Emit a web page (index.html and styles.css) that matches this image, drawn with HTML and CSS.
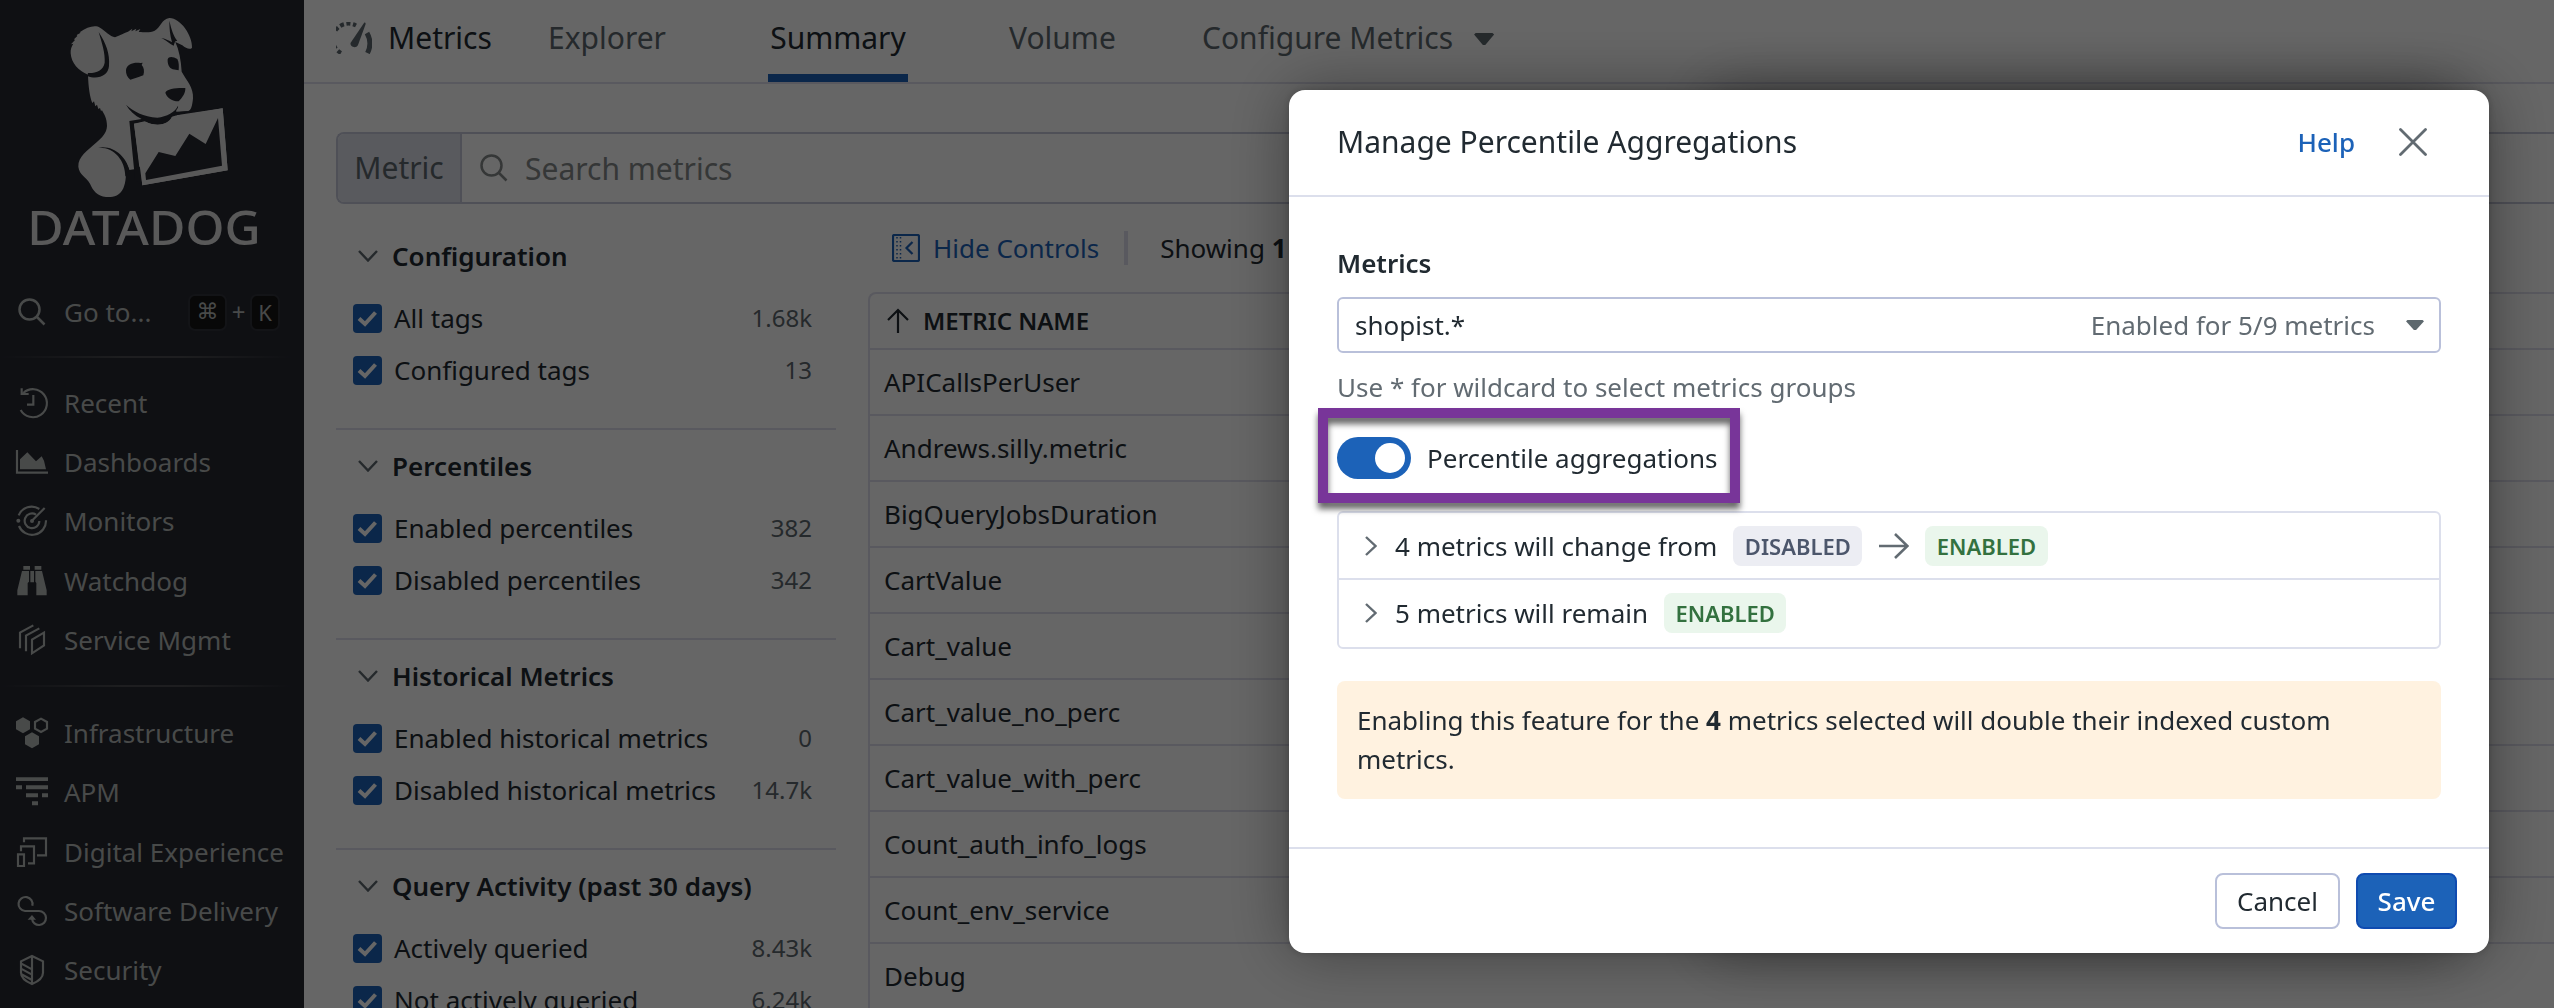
FILE: index.html
```
<!DOCTYPE html>
<html lang="en">
<head>
<meta charset="utf-8">
<title>Metrics Summary</title>
<link rel="stylesheet" href="styles.css">
</head>
<body>
<div class="app">
  <nav class="sidebar">
    <svg class="logo" viewBox="0 0 912 774" aria-label="Datadog">
      <path class="logo-fg" d="M212 160C211 148 215 138 220 131L213 133 225 120 222 118 232 108 230 105 242 98 239 97C262 80 286 74 300 83C316 93 330 109 345 112C360 106 374 98 384 95L397 86 394 94 409 86 406 94 421 87 416 96C440 97 452 98 464 92C482 82 485 57 508 54C540 53 578 106 576 143C571 150 558 146 547 136L526 126C537 150 543 180 545 215C560 242 581 262 579 295C577 318 573 331 565 333L532 337 528 346 668 325 683 511 427 556 422 505 388 510C384 500 380 492 376 486C380 520 378 546 370 565C358 591 336 592 318 591C292 588 279 572 270 551C258 530 238 525 235 500C234 470 262 452 290 427C306 412 320 400 321 378C321 355 312 342 306 331L303 333 300 324 295 327 291 314 286 319 282 304 277 309C270 292 265 262 264 224C235 212 214 190 212 160Z"/>
      <path class="logo-bg" d="M296 96C318 130 330 160 327 198C325 228 292 240 262 228L264 219C288 220 310 212 314 188C316 160 306 130 296 96ZM508 62C515 90 520 108 532 122C522 122 524 132 521 137C510 132 500 122 484 114C498 117 508 122 516 127C510 105 508 85 508 62ZM378 210C380 192 402 186 421 189L428 188 425 195C432 202 434 214 430 226L416 231 391 239C382 232 377 222 378 210ZM503 178C506 168 520 170 532 177C537 187 537 198 536 211L518 208C506 204 502 190 503 178ZM496 278C500 266 530 263 556 264C557 278 548 292 536 304C520 305 500 294 496 278ZM378 314C400 334 430 350 472 353C500 350 526 336 534 317C536 326 527 328 529 335L570 333 516 350C510 362 496 374 472 374C454 374 444 368 434 364L402 371 424 550 402 506 388 363 425 357C404 346 388 332 378 314ZM290 444C340 432 378 470 388 510L376 530C376 480 340 438 290 444ZM402 500L424 500 424 556 404 540Z"/>
      <path class="logo-fg" d="M402 371L436 366C470 380 506 376 516 351L668 325 683 511 427 556Z"/>
      <path class="logo-bg" d="M436 520L476 456 526 468 568 401 617 432 654 354 666 497 438 540Z"/>
      <text class="logo-word" x="82" y="735" textLength="700" lengthAdjust="spacingAndGlyphs">DATADOG</text>
    </svg>
    <div class="goto">
      <svg class="goto-icon" viewBox="0 0 28 28"><circle cx="11.500" cy="11.500" r="10"/><path d="M18.500 18.500L26.500 26.500"/></svg>
      <span class="goto-label">Go to...</span>
      <kbd class="key key-cmd">⌘</kbd><span class="plus">+</span><kbd class="key key-k">K</kbd>
    </div>
    <div class="rule"></div>
    <ul class="menu">
      <li><svg viewBox="0 0 96 96"><path class="s" d="M14 69A42 42 0 1 0 22 18M17 4V21H38M52 24V53H33"/></svg>Recent</li>
      <li><svg viewBox="0 0 96 96"><path class="s" d="M3 12V80H96"/><path class="f" d="M12 70V40L34 19 60 46 77 31 84 44 90 70Z"/></svg>Dashboards</li>
      <li><svg viewBox="0 0 96 96"><path class="s" d="M8 31A42 42 0 0 1 70 12M9 63A42 42 0 0 0 90 46M70 48A22 22 0 1 1 60 29M47 48L86 9"/><circle class="f" cx="7" cy="47" r="6"/><circle class="f" cx="48" cy="48" r="6"/></svg>Monitors</li>
      <li><svg viewBox="0 0 96 96"><path class="f" d="M22 3h20v11H22zM56 3h20v11H56zM43 18h11v34H43zM18 18H39V50L35 54V91H4V76ZM58 18H78L92 76V91H61V54L58 50Z"/></svg>Watchdog</li>
      <li><svg viewBox="0 0 96 96"><path class="s" d="M48 88V47L84 26V64ZM30 82V35L70 13M12 73V26L52 4"/></svg>Service Mgmt</li>
    </ul>
    <div class="rule"></div>
    <ul class="menu">
      <li><svg viewBox="0 0 96 96"><path class="f" d="M21 1L42 13V37L21 49 0 37V13ZM48 46L69 58V82L48 94 27 82V58Z"/><path class="s" d="M75 5L93 15V35L75 45 57 35V15Z"/></svg>Infrastructure</li>
      <li><svg viewBox="0 0 96 96"><path class="f" d="M0 4h96v11H0zM0 28h18v12H0zM30 28h66v12H30zM30 52h36v12H30zM78 52h18v12H78zM48 76h18v12H48z"/></svg>APM</li>
      <li><svg viewBox="0 0 96 96"><path class="s" d="M6 55H24V90H6ZM15 46V31H54V82H36M24 19V7H90V58H63"/></svg>Digital Experience</li>
      <li><svg viewBox="0 0 96 96"><path class="s" d="M49 32A21 21 0 1 0 27 48H69A21 21 0 1 1 48 71"/><path class="f" d="M48 60L35 74H60Z"/></svg>Software Delivery</li>
      <li><svg viewBox="0 0 96 96"><path class="s" d="M48 6L81 22V56Q81 76 48 90 15 76 15 56V22ZM48 6V90M15 28L48 46M15 44L48 62M15 60L48 78"/></svg>Security</li>
    </ul>
  </nav>

  <main class="main">
    <header class="topnav">
      <div class="brand">
        <svg viewBox="0 0 36 32"><path class="f" d="M28 1C29 0 30 1 29.500 2.500L22 23C20 27 14 25 14.500 21Z"/><path class="g" d="M31 11C35 18 34.500 25 31.500 31"/><path class="d" d="M5 31A15 15 0 0 1 20 3.500"/></svg>
        Metrics
      </div>
      <a class="tab tab-explorer">Explorer</a>
      <a class="tab tab-summary active">Summary</a>
      <a class="tab tab-volume">Volume</a>
      <a class="tab tab-configure">Configure Metrics<i class="caret"></i></a>
    </header>
    <div class="search">
      <span class="search-scope">Metric</span>
      <svg viewBox="0 0 28 28"><circle cx="11.500" cy="11.500" r="10"/><path d="M18.500 18.500L26.500 26.500"/></svg>
      <span class="search-text">Search metrics</span>
    </div>
    <div class="content">
      <aside class="filters">
        <section>
          <h3><svg viewBox="0 0 20 12"><path d="M1 1L10 10.500 19 1"/></svg>Configuration</h3>
          <label><span class="box"><svg viewBox="0 0 28 28"><path d="M6 14.500L12 20 22.500 8.500"/></svg></span>All tags<b>1.68k</b></label>
          <label><span class="box"><svg viewBox="0 0 28 28"><path d="M6 14.500L12 20 22.500 8.500"/></svg></span>Configured tags<b>13</b></label>
        </section>
        <section>
          <h3><svg viewBox="0 0 20 12"><path d="M1 1L10 10.500 19 1"/></svg>Percentiles</h3>
          <label><span class="box"><svg viewBox="0 0 28 28"><path d="M6 14.500L12 20 22.500 8.500"/></svg></span>Enabled percentiles<b>382</b></label>
          <label><span class="box"><svg viewBox="0 0 28 28"><path d="M6 14.500L12 20 22.500 8.500"/></svg></span>Disabled percentiles<b>342</b></label>
        </section>
        <section>
          <h3><svg viewBox="0 0 20 12"><path d="M1 1L10 10.500 19 1"/></svg>Historical Metrics</h3>
          <label><span class="box"><svg viewBox="0 0 28 28"><path d="M6 14.500L12 20 22.500 8.500"/></svg></span>Enabled historical metrics<b>0</b></label>
          <label><span class="box"><svg viewBox="0 0 28 28"><path d="M6 14.500L12 20 22.500 8.500"/></svg></span>Disabled historical metrics<b>14.7k</b></label>
        </section>
        <section>
          <h3><svg viewBox="0 0 20 12"><path d="M1 1L10 10.500 19 1"/></svg>Query Activity (past 30 days)</h3>
          <label><span class="box"><svg viewBox="0 0 28 28"><path d="M6 14.500L12 20 22.500 8.500"/></svg></span>Actively queried<b>8.43k</b></label>
          <label><span class="box"><svg viewBox="0 0 28 28"><path d="M6 14.500L12 20 22.500 8.500"/></svg></span>Not actively queried<b>6.24k</b></label>
        </section>
      </aside>
      <section class="results">
        <div class="toolbar">
          <a class="hide"><svg viewBox="0 0 28 28"><rect x="1" y="1" width="26" height="26" rx="1.500"/><path d="M20.500 8L14.500 14 20.500 20"/><path class="dots" d="M5 3V26M8.500 3V26"/></svg>Hide Controls</a>
          <span class="bar"></span>
          <span>Showing <strong>1</strong></span>
        </div>
        <div class="table">
          <div class="th"><svg viewBox="0 0 22 26"><path d="M11 25V2M1 12L11 2 21 12"/></svg>METRIC NAME</div>
          <div class="tr">APICallsPerUser</div>
          <div class="tr">Andrews.silly.metric</div>
          <div class="tr">BigQueryJobsDuration</div>
          <div class="tr">CartValue</div>
          <div class="tr">Cart_value</div>
          <div class="tr">Cart_value_no_perc</div>
          <div class="tr">Cart_value_with_perc</div>
          <div class="tr">Count_auth_info_logs</div>
          <div class="tr">Count_env_service</div>
          <div class="tr">Debug</div>
        </div>
      </section>
    </div>
  </main>
</div>

<div class="scrim">
  <div class="modal">
    <header class="modal-head">
      <h2>Manage Percentile Aggregations</h2>
      <a class="help">Help</a>
      <svg class="close" viewBox="0 0 28 28"><path d="M1.500 1.500L26.500 26.500M26.500 1.500L1.500 26.500"/></svg>
    </header>
    <div class="modal-body">
      <div class="field-label">Metrics</div>
      <div class="select"><span>shopist.*</span><span class="status">Enabled for 5/9 metrics</span><i class="caret small"></i></div>
      <div class="hint">Use * for wildcard to select metrics groups</div>
      <div class="toggle-row">
        <span class="toggle"><i></i></span>
        <span>Percentile aggregations</span>
        <span class="highlight"></span>
      </div>
      <div class="changes">
        <div class="change">
          <svg class="chev" viewBox="0 0 12 20"><path d="M1 1L10.500 10 1 19"/></svg>
          <span>4 metrics will change from</span>
          <span class="badge off">DISABLED</span>
          <svg class="arrow" viewBox="0 0 30 26"><path d="M0 13H28M16 1L28.500 13 16 25"/></svg>
          <span class="badge on">ENABLED</span>
        </div>
        <div class="change">
          <svg class="chev" viewBox="0 0 12 20"><path d="M1 1L10.500 10 1 19"/></svg>
          <span>5 metrics will remain</span>
          <span class="badge on">ENABLED</span>
        </div>
      </div>
      <p class="notice">Enabling this feature for the <strong>4</strong> metrics selected will double their indexed custom metrics.</p>
    </div>
    <footer class="modal-foot">
      <button class="btn">Cancel</button>
      <button class="btn primary">Save</button>
    </footer>
  </div>
</div>
</body>
</html>
```
FILE: styles.css
```
* { box-sizing: border-box; }
html, body { margin: 0; height: 100%; overflow: hidden; }
body { font: 26px/36px "Noto Sans", sans-serif; color: #212a31; background: #fff; }
ul, h2, h3, p { margin: 0; padding: 0; }
svg { display: block; flex: none; fill: none; }
.app { display: flex; width: 2554px; height: 1008px; overflow: hidden; }

/* sidebar */
.sidebar { width: 304px; flex: none; background: #262831; color: #b4b8b7; }
.logo { width: 304px; height: 258px; }
.logo-fg { fill: #dfdfdf; }
.logo-bg { fill: #262831; }
.logo-word { fill: #dfdfdf; font: 500 143px "Noto Sans", sans-serif; }
.goto { display: flex; align-items: center; height: 38px; margin-top: 35px; padding-left: 18px; }
.goto-icon { width: 28px; height: 28px; stroke: #b4b8b7; stroke-width: 2.5; }
.goto-label { width: 124px; margin-left: 18px; }
.plus { width: 23px; text-align: center; font-size: 24px; }
.key { display: flex; align-items: center; justify-content: center; height: 37px; background: #141414; border: 2px solid #30323a; border-radius: 7px; font: 400 22px/1 "Noto Sans", "DejaVu Sans", sans-serif; }
.key-cmd { width: 39px; font-family: "DejaVu Sans", sans-serif; }
.key-k { width: 30px; }
.rule { width: 304px; height: 2px; margin: 25px 0 15px; background: linear-gradient(90deg, #262831, #4b4c50 40%, #4b4c50 60%, #262831 96%); }
.menu { list-style: none; }
.menu + .rule { margin: 16px 0 16px; }
.menu li { display: flex; align-items: center; height: 59.3px; padding-left: 16px; gap: 16px; white-space: nowrap; }
.menu svg { width: 32px; height: 32px; overflow: visible; }
.s { stroke: #b4b8b7; stroke-width: 6.5; }
.f { fill: #b4b8b7; }

/* top navigation */
.main { flex: 1; min-width: 0; }
.topnav { display: flex; height: 84px; padding-left: 32px; border-bottom: 2px solid #dfdfed; font-size: 30px; line-height: 75px; color: #5d686e; white-space: nowrap; }
.brand { display: flex; width: 212px; gap: 16px; align-items: flex-start; color: #212a31; font-weight: 450; }
.brand svg { width: 36px; height: 32px; margin-top: 22px; }
.brand .f { fill: #5d686e; }
.brand .g { stroke: #5d686e; stroke-width: 5; }
.brand .d { stroke: #5d686e; stroke-width: 4; stroke-dasharray: 4 2.500; }
.tab { display: block; height: 82px; }
.tab-explorer { width: 220px; }
.tab-summary { width: 140px; margin-right: 101px; text-align: center; }
.tab-volume { width: 193px; }
.tab-configure { display: flex; }
.active { color: #212a31; font-weight: 450; border-bottom: 8px solid #1c62b8; }
.caret { margin: 33px 0 0 21px; width: 20px; height: 12px; background: #5d686e; clip-path: polygon(0 12%, 8% 0, 92% 0, 100% 12%, 56% 100%, 44% 100%); }

/* search */
.search { display: flex; align-items: center; height: 72px; margin: 48px 0 0 32px; border: 2px solid #c5c8da; border-right: 0; border-radius: 8px 0 0 8px; font-size: 30px; color: #85898a; }
.search-scope { width: 124px; height: 68px; line-height: 67px; text-align: center; background: #dfe1ea; color: #5d686e; border-right: 2px solid #c5c8da; border-radius: 6px 0 0 6px; }
.search svg { width: 28px; height: 28px; margin: 0 17px 0 18px; stroke: #85898a; stroke-width: 2.5; }
.search-text { padding-top: 2px; }

/* filters */
.content { display: flex; gap: 32px; padding: 16px 0 0 32px; }
.filters { width: 500px; flex: none; }
.filters section { height: 210px; padding: 16px 24px 0 17px; border-bottom: 2px solid #dfdfed; }
.filters h3 { display: flex; align-items: center; height: 40px; margin-bottom: 16px; font-size: 26px; font-weight: 600; }
.filters h3 svg { width: 20px; height: 12px; margin: 0 14px 0 5px; stroke: #5d686e; stroke-width: 2.4; }
.filters label { display: flex; align-items: center; height: 52px; white-space: nowrap; }
.filters b { margin-left: auto; font-size: 24px; font-weight: 400; color: #5d686e; }
.box { width: 29px; height: 29px; margin-right: 12px; border-radius: 4px; background: #1c62b8; }
.box svg { width: 28px; height: 28px; stroke: #fff; stroke-width: 4; }

/* results */
.results { flex: 1; min-width: 0; }
.toolbar { display: flex; align-items: center; height: 72px; padding: 0 0 16px 24px; }
.hide { display: flex; align-items: center; color: #1c62b8; }
.hide svg { width: 28px; height: 28px; margin-right: 13px; stroke: #1c62b8; stroke-width: 2.2; }
.hide .dots { stroke-dasharray: 1.500 2.500; stroke-width: 1.500; }
.bar { width: 4px; height: 34px; margin: 0 32px 0 25px; background: #dfdfed; }
.table { border: solid #dfdfed; border-width: 2px 0 0 2px; border-radius: 8px 0 0 0; }
.th { display: flex; align-items: center; height: 56px; padding-left: 17px; border-bottom: 2px solid #dfdfed; font-size: 24px; font-weight: 600; }
.th svg { width: 22px; height: 26px; margin-right: 14px; stroke: #212a31; stroke-width: 2.2; }
.tr { height: 66px; padding-left: 14px; line-height: 64px; border-bottom: 2px solid #dfdfed; }

/* dialog */
.scrim { position: fixed; inset: 0; background: rgba(0, 0, 0, .6); }
.modal { position: absolute; left: 1289px; top: 90px; width: 1200px; height: 863px; background: #fff; border-radius: 16px; box-shadow: 0 0 64px rgba(0, 0, 0, .38), 0 0 8px rgba(0, 0, 0, .2); }
.modal::before { content: ""; position: absolute; z-index: -1; inset: 0 36px 0 420px; border-radius: 16px; box-shadow: 0 0 60px rgba(0, 0, 0, .35); }
.modal-head { display: flex; align-items: center; height: 107px; padding: 0 62px 1px 48px; border-bottom: 2px solid #dcdfec; }
.modal-head h2 { flex: 1; font-size: 30px; font-weight: 400; }
.help { color: #1c62b8; font-weight: 500; }
.close { width: 28px; height: 28px; margin-left: 44px; stroke: #626b72; stroke-width: 2.8; stroke-linecap: round; }
.modal-body { height: 650px; padding: 48px 48px 0; }
.field-label { height: 52px; font-weight: 600; }
.select { display: flex; align-items: center; height: 56px; padding: 0 15px 0 16px; border: 2px solid #b9c0da; border-radius: 6px; }
.status { margin-left: auto; color: #626b72; }
.small { width: 18px; height: 10px; margin: 0 0 0 31px; }
.hint { height: 68px; padding-top: 16px; color: #626b72; }
.toggle-row { position: relative; display: flex; align-items: center; gap: 16px; width: 400px; height: 74px; margin-bottom: 16px; }
.toggle { display: flex; align-items: center; justify-content: flex-end; width: 74px; height: 42px; padding-right: 6px; border-radius: 21px; background: #1c62b8; }
.toggle i { width: 30px; height: 30px; border-radius: 50%; background: #fff; }
.highlight { position: absolute; left: -19px; top: -13px; width: 422px; height: 95px; border: 10px solid #783599; filter: drop-shadow(0 6px 3px rgba(0, 0, 0, .6)); }
.changes { border: 2px solid #dcdfec; border-radius: 6px; }
.change { display: flex; align-items: center; height: 67px; padding-left: 26px; }
.change:first-child { border-bottom: 2px solid #dcdfec; }
.change + .change { padding-bottom: 2px; }
.chev { width: 12px; height: 20px; margin-right: 18px; stroke: #626b72; stroke-width: 2.4; }
.badge { height: 40px; margin-left: 16px; padding: 0 11.5px; border-radius: 8px; font-size: 22px; font-weight: 600; line-height: 41px; }
.off { color: #4c566b; background: #ecedf3; }
.on { color: #33713f; background: #eaf6ec; }
.arrow { width: 30px; height: 26px; margin-left: 17px; stroke: #626b72; stroke-width: 2.6; }
.notice { height: 118px; margin-top: 32px; padding: 20px; border-radius: 8px; background: #fff2e0; line-height: 39px; }
.modal-foot { display: flex; align-items: center; justify-content: flex-end; gap: 16px; height: 106px; padding-right: 32px; border-top: 2px solid #dcdfec; }
.btn { width: 125px; height: 56px; padding: 0; font: 400 26px "Noto Sans", sans-serif; color: #212a31; background: #fff; border: 2px solid #b9c0da; border-radius: 8px; }
.primary { width: 101px; font-weight: 500; color: #fff; background: #1c62b8; border-color: #0f4bb0; }
```
